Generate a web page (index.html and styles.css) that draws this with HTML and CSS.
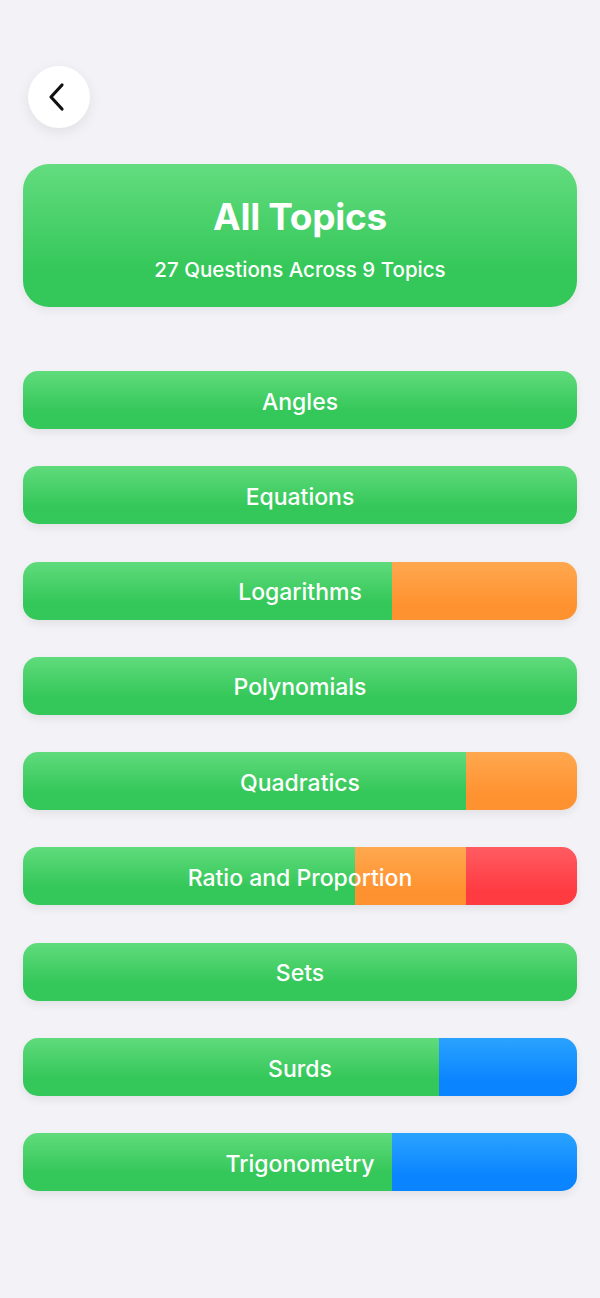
FILE: index.html
```html
<!DOCTYPE html>
<html>
<head>
<meta charset="utf-8">
<link rel="stylesheet" href="styles.css">
</head>
<body>
<div class="page">
  <div class="top">
    <button class="back" aria-label="Back">
      <svg width="22" height="30" viewBox="0 0 22 30"><path d="M16 3 L5 15 L16 27" fill="none" stroke="#111" stroke-width="3.2" stroke-linecap="round" stroke-linejoin="round"/></svg>
    </button>
  </div>
  <div class="hero">
    <div class="hero-title">All Topics</div>
    <div class="hero-sub">27 Questions Across 9 Topics</div>
  </div>
  <div class="list">
    <div class="row"><div class="seg green" style="width:100%"></div><span class="label">Angles</span></div>
    <div class="row"><div class="seg green" style="width:100%"></div><span class="label">Equations</span></div>
    <div class="row"><div class="seg green" style="width:66.6%"></div><div class="seg orange" style="width:33.4%"></div><span class="label">Logarithms</span></div>
    <div class="row"><div class="seg green" style="width:100%"></div><span class="label">Polynomials</span></div>
    <div class="row"><div class="seg green" style="width:80%"></div><div class="seg orange" style="width:20%"></div><span class="label">Quadratics</span></div>
    <div class="row"><div class="seg green" style="width:60%"></div><div class="seg orange" style="width:20%"></div><div class="seg red" style="width:20%"></div><span class="label">Ratio and Proportion</span></div>
    <div class="row"><div class="seg green" style="width:100%"></div><span class="label">Sets</span></div>
    <div class="row"><div class="seg green" style="width:75%"></div><div class="seg blue" style="width:25%"></div><span class="label">Surds</span></div>
    <div class="row"><div class="seg green" style="width:66.6%"></div><div class="seg blue" style="width:33.4%"></div><span class="label">Trigonometry</span></div>
  </div>
</div>
</body>
</html>
```
FILE: styles.css
```css
* { box-sizing: border-box; }
html, body { margin: 0; padding: 0; }
body {
  background: #F2F2F7;
  font-family: Inter, "Noto Sans", "Liberation Sans", sans-serif;
  width: 600px;
  height: 1298px;
  overflow: hidden;
}
.page {
  padding: 66px 23px 0 23px;
  display: flex;
  flex-direction: column;
}
.top { padding-left: 5px; height: 62px; }
.back {
  width: 62px; height: 62px;
  border-radius: 50%;
  border: none;
  background: #fff;
  box-shadow: 0 4px 14px rgba(0,0,0,0.08);
  display: flex; align-items: center; justify-content: center;
  padding: 0 4px 0 0;
}
.hero {
  margin-top: 36px;
  height: 143px;
  border-radius: 26px;
  background: linear-gradient(#63DC7F, #34C759 75%);
  box-shadow: 0 4px 10px rgba(0,0,0,0.06);
  color: #fff;
  display: flex; flex-direction: column; align-items: center;
  padding-top: 30px;
}
.hero-title { font-size: 37px; font-weight: 700; line-height: 46px; letter-spacing: -0.3px; }
.hero-sub { margin-top: 17px; font-size: 20.5px; font-weight: 500; line-height: 26px; }
.list {
  margin-top: 64px;
  display: flex; flex-direction: column; gap: 37.3px;
}
.row {
  position: relative;
  height: 58px;
  border-radius: 15px;
  overflow: hidden;
  display: flex;
  box-shadow: 0 4px 8px rgba(0,0,0,0.07);
}
.seg { height: 100%; }
.green { background: linear-gradient(#60DB7C, #34C759 70%); }
.orange { background: linear-gradient(#FFA84F, #FF9230 75%); }
.red { background: linear-gradient(#FF5C62, #FF3B42 75%); }
.blue { background: linear-gradient(#2AA3FF, #0A84FF 75%); }
.label {
  position: absolute; inset: 0;
  display: flex; align-items: center; justify-content: center;
  color: #fff;
  font-size: 23px; font-weight: 500;
  padding-top: 3px;
}
```
